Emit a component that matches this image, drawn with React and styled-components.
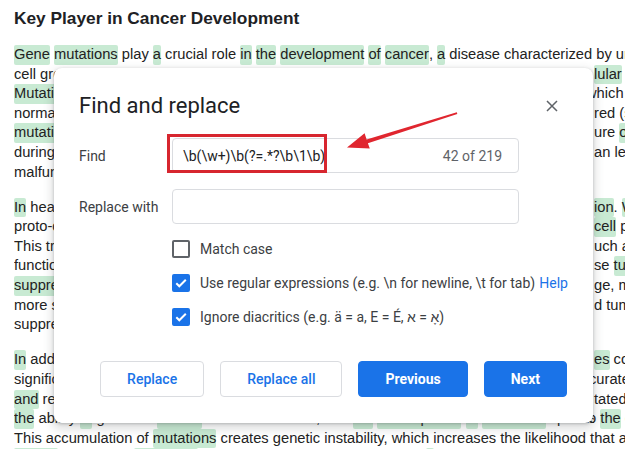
import React from "react";
import styled, { createGlobalStyle } from "styled-components";

const GlobalStyle = createGlobalStyle`
  html, body { margin: 0; padding: 0; background: #fff; }
  body { overflow: hidden; }
  #root { width: 625px; height: 449px; }
`;

const Page = styled.div`
  position: relative;
  width: 625px;
  height: 449px;
  overflow: hidden;
  background: #fff;
`;

const Doc = styled.div`
  padding: 7px 0 0 14px;
  font-family: "Liberation Sans", Arial, sans-serif;
  font-size: 14.7px;
  color: #222;
`;

const Heading = styled.h1`
  margin: 0 0 16px;
  font-size: 17.3px;
  line-height: 22px;
  font-weight: 700;
  color: #202124;
`;

const Para = styled.div`
  margin-bottom: 15.5px;
  line-height: 19.6px;
`;

const Line = styled.div`
  display: grid;
  grid-template-columns: 580px max-content;
  white-space: nowrap;
  height: 19.6px;
`;

const LeftText = styled.span`
  overflow: hidden;
`;

const RightText = styled.span`
  white-space: nowrap;
  margin-left: ${(p) => p.$shift || 0}px;
`;

const FullLine = styled.div`
  white-space: nowrap;
  height: 19.6px;
`;

const Hit = styled.span`
  display: inline-block;
  background: #c8ead3;
  border-radius: 2px;
`;

const Dialog = styled.div`
  position: absolute;
  left: 54px;
  top: 68px;
  width: 539px;
  height: 355px;
  box-sizing: border-box;
  padding: 23px 26px 26px 25px;
  background: #fff;
  border-radius: 8px;
  box-shadow: 0 4px 8px 3px rgba(60, 64, 67, 0.15), 0 1px 3px rgba(60, 64, 67, 0.3);
  font-family: Roboto, "Liberation Sans", Arial, sans-serif;
  display: flex;
  flex-direction: column;
`;

const Header = styled.div`
  display: flex;
  align-items: center;
  justify-content: space-between;
  height: 30px;
`;

const Title = styled.h2`
  margin: 0;
  font-size: 22px;
  line-height: 28px;
  font-weight: 400;
  color: #202124;
`;

const CloseButton = styled.button`
  width: 30px;
  height: 30px;
  border: 0;
  padding: 0;
  background: none;
  display: flex;
  align-items: center;
  justify-content: center;
  cursor: pointer;
`;

const Form = styled.div`
  margin-top: 17px;
  display: grid;
  grid-template-columns: 93px 347px;
  row-gap: 16px;
  align-items: center;
`;

const Label = styled.label`
  font-size: 14px;
  color: #3c4043;
`;

const Field = styled.div`
  height: 35px;
  box-sizing: border-box;
  border: 1px solid #dadce0;
  border-radius: 4px;
  display: flex;
  align-items: center;
  padding: 0 16px 0 10px;
  font-size: 14px;
  color: #202124;
  white-space: nowrap;
`;

const Count = styled.span`
  margin-left: auto;
  color: #5f6368;
`;

const Options = styled.div`
  margin: 8px 0 0 93px;
  display: flex;
  flex-direction: column;
`;

const Option = styled.div`
  height: 34px;
  display: flex;
  align-items: center;
  gap: 10px;
  font-size: 14px;
  color: #3c4043;
  white-space: nowrap;
`;

const Box = styled.span`
  flex: none;
  width: 18px;
  height: 18px;
  box-sizing: border-box;
  border-radius: 2px;
  border: 2px solid ${(p) => (p.$checked ? "#1a73e8" : "#5f6368")};
  background: ${(p) => (p.$checked ? "#1a73e8" : "#fff")};
  display: flex;
  align-items: center;
  justify-content: center;
`;

const HelpLink = styled.a`
  color: #1a73e8;
  text-decoration: none;
  margin-left: 4px;
`;

const Actions = styled.div`
  margin-top: auto;
  display: flex;
  justify-content: flex-end;
  gap: 16px;
`;

const Button = styled.button`
  height: 36px;
  box-sizing: border-box;
  padding: 0 26px;
  border-radius: 4px;
  font-family: inherit;
  font-size: 14px;
  font-weight: ${(p) => (p.$primary ? 700 : 500)};
  border: 1px solid ${(p) => (p.$primary ? "#1a73e8" : "#dadce0")};
  background: ${(p) => (p.$primary ? "#1a73e8" : "#fff")};
  color: ${(p) => (p.$primary ? "#fff" : "#1a73e8")};
  cursor: pointer;
`;

const Callout = styled.div`
  position: absolute;
  left: 167px;
  top: 134px;
  width: 160px;
  height: 39px;
  box-sizing: border-box;
  border: 3px solid #d7262f;
  pointer-events: none;
`;

const ArrowLayer = styled.svg`
  position: absolute;
  left: 0;
  top: 0;
  pointer-events: none;
`;

const mark = (s) =>
  s.split(/(\[[^\]]+\])/).map((p, i) =>
    p.startsWith("[") ? <Hit key={i}>{p.slice(1, -1)}</Hit> : p
  );

const paragraphs = [
  [
    { full: "[Gene] [mutations] play [a] crucial role [in] [the] [development] [of] [cancer], [a] disease characterized by uncontrolled" },
    { left: "cell growth and division. These changes can disrupt the normal control of the", right: "[lular] [processes]" },
    { left: "[Mutations] in specific genes can alter the function of the proteins that they encode,", right: "which control", shift: -8 },
    { left: "normal cells and lead them to behave abnormally. Mutations may be inherited or acqui", right: "red (somatic)" },
    { left: "[mutations] are caused by factors such as radiation, smoking, or chemical expos", right: "ure [or] errors" },
    { left: "during DNA replication. Over time, these accumulated errors in key genes c", right: "an lead to" },
    { left: "malfunctioning proteins that drive the formation of tumors in the body." },
  ],
  [
    { left: "[In] healthy cells, genes tightly control growth, repair and the process of cell divis", right: "[ion]. [When]" },
    { left: "proto-oncogenes are normal genes that help to regulate the growth of the", right: "[cell] proliferation" },
    { left: "This transformation can occur through point mutations, gene amplification, s", right: "uch as" },
    { left: "functions normally slow down cell division. Mutations that inactivate the", right: "se [tumor]" },
    { left: "[suppressor] genes allow cells to grow unchecked. When their DNA is dama", right: "ge, making" },
    { left: "more susceptible to further mutations. Over time, oncogene activation an", right: "d tumor" },
    { left: "suppression failure can lead to cancer." },
  ],
  [
    { left: "[In] addition to oncogenes and tumor suppressors, DNA repair gen", right: "[es] contribute" },
    { left: "significantly to cancer risk. These genes are responsible for ac", right: "curate DNA", shift: -5 },
    { left: "[and] repair. When they are mu", right: "tated," },
    { left: "[the] ability [of] genes to [correct] errors is reduced, and [the] [development] [of] [mutations] speeds up, passing them", right: "to [the] genome", shift: -10 },
    { full: "This accumulation of [mutations] creates genetic instability, which increases the likelihood that a" },
    { full: "[cancer] may arise, [mutations] accumulate in genes that regulate [a] cell's growth and division." },
  ],
];

const CheckMark = () => (
  <svg width="14" height="14" viewBox="0 0 14 14">
    <path d="M2.3 7.3l3 3L11.8 3.8" fill="none" stroke="#fff" strokeWidth="2" />
  </svg>
);

const CloseIcon = () => (
  <svg width="12" height="12" viewBox="0 0 12 12">
    <path d="M1 1L11 11M11 1L1 11" stroke="#5f6368" strokeWidth="1.5" />
  </svg>
);

export default function App() {
  return (
    <Page>
      <GlobalStyle />
      <Doc>
        <Heading>Key Player in Cancer Development</Heading>
        {paragraphs.map((lines, pi) => (
          <Para key={pi}>
            {lines.map((l, li) =>
              l.full ? (
                <FullLine key={li}>{mark(l.full)}</FullLine>
              ) : (
                <Line key={li}>
                  <LeftText>{mark(l.left)}</LeftText>
                  <RightText $shift={l.shift}>{l.right ? mark(l.right) : null}</RightText>
                </Line>
              )
            )}
          </Para>
        ))}
      </Doc>

      <Dialog>
        <Header>
          <Title>Find and replace</Title>
          <CloseButton aria-label="Close">
            <CloseIcon />
          </CloseButton>
        </Header>
        <Form>
          <Label>Find</Label>
          <Field>
            <span>{"\\b(\\w+)\\b(?=.*?\\b\\1\\b)"}</span>
            <Count>42 of 219</Count>
          </Field>
          <Label>Replace with</Label>
          <Field />
        </Form>
        <Options>
          <Option>
            <Box />
            <span>Match case</span>
          </Option>
          <Option>
            <Box $checked>
              <CheckMark />
            </Box>
            <span>
              {"Use regular expressions (e.g. \\n for newline, \\t for tab)"}
              <HelpLink href="#">Help</HelpLink>
            </span>
          </Option>
          <Option>
            <Box $checked>
              <CheckMark />
            </Box>
            <span>{"Ignore diacritics (e.g. ä = a, E = É, א\u200E = \u200Eאָ\u200E)"}</span>
          </Option>
        </Options>
        <Actions>
          <Button>Replace</Button>
          <Button>Replace all</Button>
          <Button $primary>Previous</Button>
          <Button $primary>Next</Button>
        </Actions>
      </Dialog>

      <Callout />
      <ArrowLayer width="625" height="449" viewBox="0 0 625 449">
        <polygon
          points="347,147.5 369.8,148.6 367.9,143.2 457.3,113.9 456.8,112.2 366.6,139.4 364.6,133.2"
          fill="#e0262f"
        />
      </ArrowLayer>
    </Page>
  );
}
